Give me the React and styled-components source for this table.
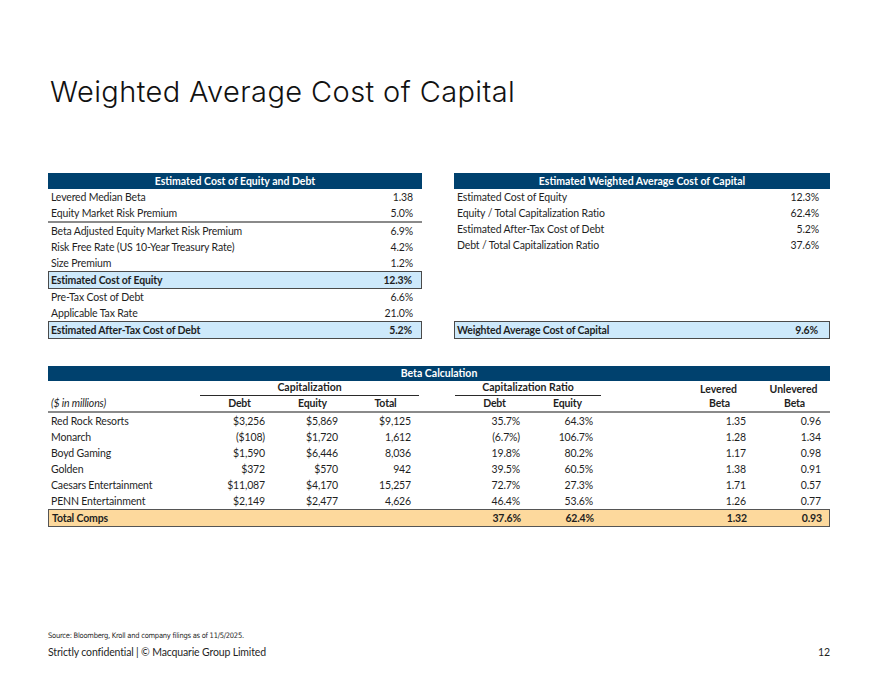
import styled, { createGlobalStyle } from 'styled-components';

const GlobalStyle = createGlobalStyle`
  body {
    margin: 0;
    background: #ffffff;
  }
`;

const NAVY = '#00416e';
const TEXT = '#1f1f1f';

const costRows = [
    { label: 'Levered Median Beta', value: '1.38' },
    { label: 'Equity Market Risk Premium', value: '5.0%', rule: true },
    { label: 'Beta Adjusted Equity Market Risk Premium', value: '6.9%' },
    { label: 'Risk Free Rate (US 10-Year Treasury Rate)', value: '4.2%' },
    { label: 'Size Premium', value: '1.2%' },
    { label: 'Estimated Cost of Equity', value: '12.3%', tone: 'blue' },
    { label: 'Pre-Tax Cost of Debt', value: '6.6%' },
    { label: 'Applicable Tax Rate', value: '21.0%' },
    { label: 'Estimated After-Tax Cost of Debt', value: '5.2%', tone: 'blue' },
];

const waccRows = [
    { label: 'Estimated Cost of Equity', value: '12.3%' },
    { label: 'Equity / Total Capitalization Ratio', value: '62.4%' },
    { label: 'Estimated After-Tax Cost of Debt', value: '5.2%' },
    { label: 'Debt / Total Capitalization Ratio', value: '37.6%' },
];

const comps = [
    ['Red Rock Resorts', '$3,256', '$5,869', '$9,125', '35.7%', '64.3%', '1.35', '0.96'],
    ['Monarch', '($108)', '$1,720', '1,612', '(6.7%)', '106.7%', '1.28', '1.34'],
    ['Boyd Gaming', '$1,590', '$6,446', '8,036', '19.8%', '80.2%', '1.17', '0.98'],
    ['Golden', '$372', '$570', '942', '39.5%', '60.5%', '1.38', '0.91'],
    ['Caesars Entertainment', '$11,087', '$4,170', '15,257', '72.7%', '27.3%', '1.71', '0.57'],
    ['PENN Entertainment', '$2,149', '$2,477', '4,626', '46.4%', '53.6%', '1.26', '0.77'],
];

const App = () => {
    return (
        <>
            <GlobalStyle />
            <Slide>
                <Title>Weighted Average Cost of Capital</Title>

                <TopGrid>
                    <Panel>
                        <PanelHeader>Estimated Cost of Equity and Debt</PanelHeader>
                        {costRows.map((r) => (
                            <Row key={r.label} $rule={r.rule} $tone={r.tone}>
                                <span>{r.label}</span>
                                <span>{r.value}</span>
                            </Row>
                        ))}
                    </Panel>
                    <Panel>
                        <PanelHeader>Estimated Weighted Average Cost of Capital</PanelHeader>
                        {waccRows.map((r) => (
                            <Row key={r.label} $wide>
                                <span>{r.label}</span>
                                <span>{r.value}</span>
                            </Row>
                        ))}
                        <Row $tone="blue" $wide $bottom>
                            <span>Weighted Average Cost of Capital</span>
                            <span>9.6%</span>
                        </Row>
                    </Panel>
                </TopGrid>

                <BetaTable>
                    <PanelHeader $short>Beta Calculation</PanelHeader>
                    <GroupRow>
                        <Group $span="2 / 5">Capitalization</Group>
                        <Group $span="6 / 8">Capitalization Ratio</Group>
                        <GroupLabel $col={9}>Levered</GroupLabel>
                        <GroupLabel $col={10}>Unlevered</GroupLabel>
                    </GroupRow>
                    <HeadRow>
                        <Units>($ in millions)</Units>
                        <ColHead $col={2}>Debt</ColHead>
                        <ColHead $col={3}>Equity</ColHead>
                        <ColHead $col={4}>Total</ColHead>
                        <ColHead $col={6}>Debt</ColHead>
                        <ColHead $col={7}>Equity</ColHead>
                        <ColHead $col={9}>Beta</ColHead>
                        <ColHead $col={10}>Beta</ColHead>
                    </HeadRow>
                    {comps.map(([name, debt, eq, total, rd, re, lev, unlev]) => (
                        <CompRow key={name}>
                            <Name>{name}</Name>
                            <Num $col={2}>{debt}</Num>
                            <Num $col={3}>{eq}</Num>
                            <Num $col={4}>{total}</Num>
                            <Num $col={6}>{rd}</Num>
                            <Num $col={7}>{re}</Num>
                            <Num $col={9}>{lev}</Num>
                            <Num $col={10}>{unlev}</Num>
                        </CompRow>
                    ))}
                    <CompRow $total>
                        <Name>Total Comps</Name>
                        <Num $col={6}>37.6%</Num>
                        <Num $col={7}>62.4%</Num>
                        <Num $col={9}>1.32</Num>
                        <Num $col={10}>0.93</Num>
                    </CompRow>
                </BetaTable>

                <Footer>
                    <Source>Source: Bloomberg, Kroll and company filings as of 11/5/2025.</Source>
                    <FootLine>
                        <span>Strictly confidential | © Macquarie Group Limited</span>
                        <span>12</span>
                    </FootLine>
                </Footer>
            </Slide>
        </>
    );
};

const Slide = styled.div`
  width: 880px;
  height: 680px;
  box-sizing: border-box;
  padding: 0 50px 0 48px;
  display: flex;
  flex-direction: column;
  font-family: Lato, "Liberation Sans", sans-serif;
  color: ${TEXT};
  overflow: hidden;
`;

const Title = styled.h1`
  margin: 74px 0 0 2px;
  font-family: Inter, "Open Sans", sans-serif;
  font-weight: 300;
  font-size: 29px;
  line-height: 36px;
  color: #111;
  letter-spacing: 0.4px;
`;

const TopGrid = styled.div`
  margin-top: 63px;
  display: grid;
  grid-template-columns: 374px 376px;
  column-gap: 32px;
`;

const Panel = styled.section`
  display: flex;
  flex-direction: column;
`;

const PanelHeader = styled.div`
  height: ${(p) => (p.$short ? '15px' : '16px')};
  background: ${NAVY};
  color: #fff;
  font-size: 10.5px;
  font-weight: 700;
  line-height: ${(p) => (p.$short ? '15px' : '16px')};
  text-align: center;
`;

const Row = styled.div`
  height: 16px;
  display: flex;
  align-items: center;
  justify-content: space-between;
  padding: 0 ${(p) => (p.$wide ? '11px' : '9px')} 0 3px;
  font-size: 10.5px;
  letter-spacing: -0.15px;
  border-bottom: ${(p) => (p.$rule ? '2px solid #8a8a8a' : 'none')};
  margin-top: ${(p) => (p.$bottom ? 'auto' : '0')};
  ${(p) => p.$tone === 'blue' && `
    background: #cde9fb;
    border: 1px solid #4a4a4a;
    font-weight: 700;
    padding-left: 2px;
  `}
`;

const BetaTable = styled.section`
  margin-top: 27px;
  display: flex;
  flex-direction: column;
`;

const columns = '152px 73px 73px 73px 36px 73px 73px 78px 75px 75px';

const GroupRow = styled.div`
  display: grid;
  grid-template-columns: ${columns};
  height: 14px;
  font-size: 10.5px;
  font-weight: 700;
`;

const Group = styled.div`
  grid-column: ${(p) => p.$span};
  grid-row: 1;
  text-align: center;
  line-height: 12px;
  border-bottom: 1px solid #2a2a2a;
`;

const GroupLabel = styled.div`
  grid-column: ${(p) => p.$col};
  grid-row: 1;
  text-align: center;
  padding: 1px 0 0 4px;
  line-height: 14px;
`;

const HeadRow = styled.div`
  display: grid;
  grid-template-columns: ${columns};
  height: 16px;
  align-items: center;
  font-size: 10.5px;
  letter-spacing: -0.15px;
  border-bottom: 2px solid #8a8a8a;
`;

const Units = styled.div`
  grid-column: 1;
  font-style: italic;
  padding-left: 3px;
`;

const ColHead = styled.div`
  grid-column: ${(p) => p.$col};
  font-weight: 700;
  text-align: center;
  padding-left: 6px;
`;

const CompRow = styled.div`
  display: grid;
  grid-template-columns: ${columns};
  height: 16px;
  align-items: center;
  font-size: 10.5px;
  letter-spacing: -0.15px;
  ${(p) => p.$total && `
    background: #fdd99d;
    border: 1px solid #555;
    font-weight: 700;
  `}
`;

const Name = styled.div`
  grid-column: 1;
  grid-row: 1;
  padding-left: 3px;
  white-space: nowrap;
`;

const Num = styled.div`
  grid-column: ${(p) => p.$col};
  grid-row: 1;
  text-align: right;
  padding-right: 8px;
`;

const Footer = styled.footer`
  margin-top: auto;
  margin-bottom: 22px;
  display: flex;
  flex-direction: column;
  gap: 5px;
`;

const Source = styled.div`
  font-family: "Liberation Sans Narrow", "DejaVu Sans Condensed", sans-serif;
  font-size: 7.5px;
  line-height: 10px;
  letter-spacing: -0.25px;
  margin-top: 2px;
`;

const FootLine = styled.div`
  display: flex;
  justify-content: space-between;
  font-size: 10.5px;
  line-height: 12px;
  letter-spacing: -0.15px;
`;

export default App;
